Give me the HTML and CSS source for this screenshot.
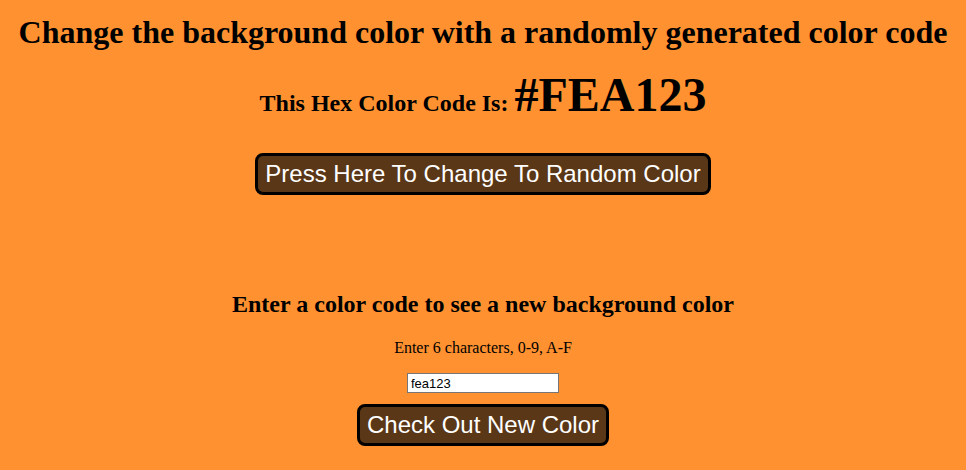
FILE: index.html
```html
<!DOCTYPE html>
<html>
<head>
<meta charset="utf-8">
<link rel="stylesheet" href="styles.css">
</head>
<body class="page">
  <h1 class="title">Change the background color with a randomly generated color code</h1>
  <h2 class="code-line">This Hex Color Code Is: <span class="code">#FEA123</span></h2>
  <button class="btn btn-random">Press Here To Change To Random Color</button>
  <section class="entry">
    <h3 class="entry-title">Enter a color code to see a new background color</h3>
    <p class="hint">Enter 6 characters, 0-9, A-F</p>
    <input class="code-input" type="text" value="fea123">
    <button class="btn btn-check">Check Out New Color</button>
  </section>
</body>
</html>
```
FILE: styles.css
```css
html, body { margin: 0; padding: 0; }
.page {
  background: #ff9130;
  font-family: "Liberation Serif", "Times New Roman", serif;
  color: #000;
  text-align: center;
  padding: 8px;
  height: 470px;
  box-sizing: border-box;
  display: flex;
  flex-direction: column;
  align-items: center;
}
.title {
  font-size: 32px;
  font-weight: bold;
  margin: 6px 0 0;
  line-height: 37px;
}
.code-line {
  font-size: 24px;
  font-weight: bold;
  margin: 24px 0 0;
  line-height: 40px;
}
.code { font-size: 48px; }
.btn {
  font-family: "Liberation Sans", Arial, sans-serif;
  color: #fff;
  background: #5a3716;
  border: 3px solid #000;
  border-radius: 8px;
  font-size: 24px;
  padding: 3px 7px;
  line-height: 30px;
}
.btn-random { margin-top: 30px; }
.entry {
  display: flex;
  flex-direction: column;
  align-items: center;
  margin-top: 95px;
}
.entry-title {
  font-size: 24px;
  font-weight: bold;
  margin: 0;
  line-height: 28px;
}
.hint {
  font-size: 16px;
  margin: 20px 0 0;
  line-height: 20px;
}
.code-input {
  margin-top: 15px;
  width: 152px;
  height: 20px;
  box-sizing: border-box;
  font-family: "Liberation Sans", Arial, sans-serif;
  font-size: 13px;
  padding: 1px 3px;
  border: 1px solid #767676;
  background: #fff;
}
.btn-check { margin-top: 11px; }
```
